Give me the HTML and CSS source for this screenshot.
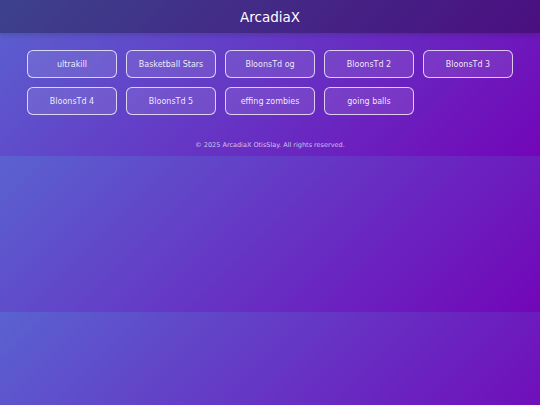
FILE: index.html
```html
<!DOCTYPE html>
<html lang="en">
<head>
<meta charset="utf-8">
<title>ArcadiaX</title>
<link rel="stylesheet" href="styles.css">
</head>
<body>
  <header class="site-header">
    <h1 class="site-title">ArcadiaX</h1>
  </header>
  <main class="game-grid">
    <a class="game-btn" href="#">ultrakill</a>
    <a class="game-btn" href="#">Basketball Stars</a>
    <a class="game-btn" href="#">BloonsTd og</a>
    <a class="game-btn" href="#">BloonsTd 2</a>
    <a class="game-btn" href="#">BloonsTd 3</a>
    <a class="game-btn" href="#">BloonsTd 4</a>
    <a class="game-btn" href="#">BloonsTd 5</a>
    <a class="game-btn" href="#">effing zombies</a>
    <a class="game-btn" href="#">going balls</a>
  </main>
  <footer class="site-footer">© 2025 ArcadiaX OtisSlay. All rights reserved.</footer>
</body>
</html>
```
FILE: styles.css
```css
body {
  margin: 0;
  font-family: "DejaVu Sans", Verdana, sans-serif;
  color: #fff;
  background: linear-gradient(135deg, #5a62d0 0%, #7206b8 100%);
}

.site-header {
  height: 33px;
  display: flex;
  align-items: center;
  justify-content: center;
  background: rgba(0, 0, 0, 0.32);
  box-shadow: 0 2px 6px rgba(0, 0, 0, 0.15);
}

.site-title {
  margin: 0;
  font-size: 13.5px;
  font-weight: normal;
  color: #fff;
}

.game-grid {
  display: grid;
  grid-template-columns: repeat(5, 90px);
  gap: 9px;
  padding: 17px 27px 0;
}

.game-btn {
  height: 28px;
  box-sizing: border-box;
  display: flex;
  align-items: center;
  justify-content: center;
  border: 1px solid rgba(255, 255, 255, 0.75);
  border-radius: 6px;
  background: rgba(255, 255, 255, 0.1);
  color: rgba(255, 255, 255, 0.9);
  font-size: 8px;
  text-decoration: none;
}

.site-footer {
  padding: 26px 0 6px;
  line-height: 9px;
  text-align: center;
  font-size: 6.5px;
  color: rgba(255, 255, 255, 0.7);
}
```
